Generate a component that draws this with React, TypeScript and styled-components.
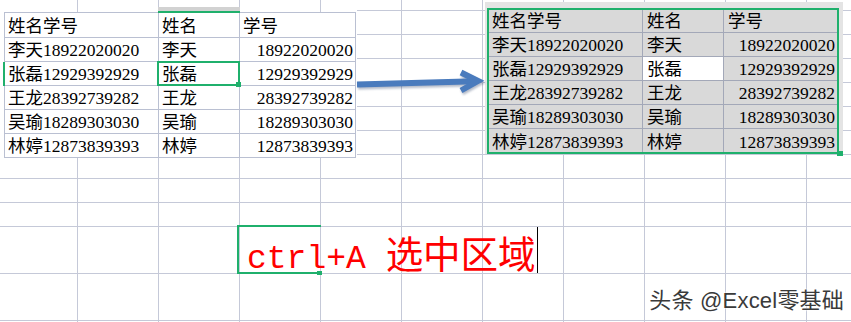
import React from "react";
import styled, { createGlobalStyle } from "styled-components";

const GRID = "#c5c9d8";
const GREEN = "#1fb06c";

const GlobalStyle = createGlobalStyle`
  html, body {
    margin: 0;
    padding: 0;
    background: #fff;
  }

  body {
    width: 851px;
    height: 322px;
    overflow: hidden;
    font-family: "Liberation Serif", "Noto Sans CJK SC", serif;
  }
`;

const Sheet = styled.div`
  width: 851px;
  height: 322px;
  display: flex;
  flex-direction: column;
  overflow: hidden;
  background: #fff;
`;

const TopArea = styled.div`
  flex: none;
  height: 226px;
  display: flex;
  align-items: flex-start;
  background-image: linear-gradient(to right, ${GRID} 1px, transparent 1px),
    linear-gradient(to bottom, ${GRID} 1px, transparent 1px);
  background-size: 81px 100%, 100% 24px;
  background-position: 77px 0, 0 10px;
`;

const BottomArea = styled.div`
  flex: 1;
  display: flex;
  flex-direction: column;
  background-image: linear-gradient(to right, ${GRID} 1px, transparent 1px),
    linear-gradient(to bottom, ${GRID} 1px, transparent 1px);
  background-size: 81px 100%, 100% 47px;
  background-position: 77px 0, 0 0;
`;

/* pasted screenshot on the left */
const LeftShot = styled.div`
  flex: none;
  padding: 12px 1px 4px 4px;
  background-color: #fff;
  background-image: linear-gradient(to right, ${GRID} 1px, transparent 1px);
  background-size: 81px 100%;
  background-position: 77px 0;
`;

/* pasted screenshot on the right */
const RightShot = styled.div`
  flex: none;
  margin-top: 2px;
  padding: 6px 4px 0 2px;
  background: #e4e4e4;
`;

const Table = styled.div<{ $cols: string; $rows: string; $line: string; $framed?: boolean }>`
  display: grid;
  grid-template-columns: ${({ $cols }) => $cols};
  grid-template-rows: ${({ $rows }) => $rows};
  border-top: ${({ $framed, $line }) => ($framed ? `1px solid ${$line}` : "none")};
  border-left: ${({ $framed, $line }) => ($framed ? `1px solid ${$line}` : "none")};
  background: #fff;
`;

const Selection = styled.div`
  position: relative;

  &::after {
    content: "";
    position: absolute;
    inset: 0;
    border: 2px solid ${GREEN};
    pointer-events: none;
  }

  &::before {
    content: "";
    position: absolute;
    right: -4px;
    bottom: -2px;
    width: 6px;
    height: 5px;
    background: ${GREEN};
    z-index: 1;
  }
`;

const Cell = styled.div<{
  $line: string;
  $right?: boolean;
  $fill?: string;
  $padL: number;
  $padR: number;
  $active?: boolean;
  $colMark?: boolean;
  $rowMark?: boolean;
}>`
  position: relative;
  display: flex;
  align-items: center;
  justify-content: ${({ $right }) => ($right ? "flex-end" : "flex-start")};
  padding: 1px ${({ $padR }) => $padR}px 0 ${({ $padL }) => $padL}px;
  border-right: 1px solid ${({ $line }) => $line};
  border-bottom: 1px solid ${({ $line }) => $line};
  background: ${({ $fill }) => $fill || "#fff"};
  color: #000;
  font-size: 17.5px;
  line-height: 22px;
  white-space: nowrap;
  box-shadow: ${({ $rowMark }) => ($rowMark ? `-2px 0 0 ${GREEN}` : "none")};

  ${({ $active }) =>
    $active &&
    `
    &::after {
      content: "";
      position: absolute;
      left: -2px;
      top: -1px;
      right: -1px;
      bottom: -1px;
      border: 2px solid ${GREEN};
    }
    &::before {
      content: "";
      position: absolute;
      right: -2px;
      bottom: -2px;
      width: 5px;
      height: 5px;
      background: ${GREEN};
      z-index: 1;
    }
  `}

  ${({ $colMark }) =>
    $colMark &&
    `
    &::before {
      content: "";
      position: absolute;
      left: -1px;
      right: -1px;
      top: -6px;
      height: 6px;
      box-sizing: border-box;
      background: #d2d2d2;
      border-bottom: 2px solid ${GREEN};
    }
  `}
`;

const ArrowSvg = styled.svg`
  flex: none;
  margin-top: 66px;
  overflow: visible;
  filter: drop-shadow(1px 2px 1px rgba(40, 60, 100, 0.35));
`;

const ActiveCell = styled.div`
  align-self: flex-start;
  position: relative;
  box-sizing: border-box;
  width: 84px;
  height: 49px;
  margin: -1px 0 0 237px;
  padding: 2px 0 0 8px;
  border: 2px solid ${GREEN};
  border-right: none;
  white-space: nowrap;

  &::after {
    content: "";
    position: absolute;
    right: -1px;
    bottom: -3px;
    width: 5px;
    height: 4px;
    background: ${GREEN};
  }
`;

const Typed = styled.span`
  display: inline-block;
  height: 44px;
  margin-top: -2px;
  padding-top: 2px;
  padding-right: 1px;
  border-right: 1px solid #000;
  color: #ff0000;
  font-family: "Noto Sans CJK SC", sans-serif;
  font-size: 37.5px;
  line-height: 45px;
`;

const Ascii = styled.span`
  font-family: "Liberation Mono", monospace;
  font-size: 33px;
  line-height: 1;
`;

const Footer = styled.div`
  display: flex;
  justify-content: flex-end;
  margin-top: 14px;
  padding-right: 7px;
`;

const Watermark = styled.span`
  font-family: "Liberation Sans", "Noto Sans CJK SC", sans-serif;
  font-size: 22px;
  line-height: 26px;
  letter-spacing: 0.2px;
  color: #3a3a3a;
  text-shadow: 0 0 2px #fff, 0 0 2px #fff, 0 0 1px #fff;
`;

const header = ["姓名学号", "姓名", "学号"];
const rows = [
  ["李天18922020020", "李天", "18922020020"],
  ["张磊12929392929", "张磊", "12929392929"],
  ["王龙28392739282", "王龙", "28392739282"],
  ["吴瑜18289303030", "吴瑜", "18289303030"],
  ["林婷12873839393", "林婷", "12873839393"],
];

const LEFT_LINE = "#bac0d2";
const RIGHT_LINE = "#a3a8b8";

const LeftTable = () => (
  <Table $cols="154px 81px 116px" $rows="25px repeat(5, 24px)" $line={LEFT_LINE} $framed>
    {header.map((h, i) => (
      <Cell key={h} $line={LEFT_LINE} $padL={3} $padR={2} $colMark={i === 1}>
        {h}
      </Cell>
    ))}
    {rows.map((r, ri) =>
      r.map((v, ci) => (
        <Cell
          key={`${ri}-${ci}`}
          $line={LEFT_LINE}
          $padL={3}
          $padR={2}
          $right={ci === 2}
          $active={ri === 1 && ci === 1}
          $rowMark={ri === 1 && ci === 0}
        >
          {v}
        </Cell>
      ))
    )}
  </Table>
);

const RightTable = () => (
  <Selection>
    <Table $cols="156px 81px 115px" $rows="25px repeat(4, 24px) 25px" $line={RIGHT_LINE}>
      {header.map((h, i) => (
        <Cell key={h} $line={RIGHT_LINE} $fill="#d9d9d9" $padL={i === 0 ? 5 : 4} $padR={3}>
          {h}
        </Cell>
      ))}
      {rows.map((r, ri) =>
        r.map((v, ci) => (
          <Cell
            key={`${ri}-${ci}`}
            $line={RIGHT_LINE}
            $fill={ri === 1 && ci === 1 ? "#fff" : "#d9d9d9"}
            $padL={ci === 0 ? 5 : 4}
            $padR={3}
            $right={ci === 2}
          >
            {v}
          </Cell>
        ))
      )}
    </Table>
  </Selection>
);

const Arrow = () => (
  <ArrowSvg width="128" height="36" viewBox="0 0 128 36">
    <path d="M0 18.5 L118 15.2" stroke="#4a7bbd" strokeWidth="6" fill="none" />
    <path
      d="M104 6.5 L121 15 L104 24.5"
      stroke="#4a7bbd"
      strokeWidth="6"
      fill="none"
      strokeLinejoin="miter"
      strokeMiterlimit={10}
    />
  </ArrowSvg>
);

export default function App() {
  return (
    <>
      <GlobalStyle />
      <Sheet>
        <TopArea>
          <LeftShot>
            <LeftTable />
          </LeftShot>
          <Arrow />
          <RightShot>
            <RightTable />
          </RightShot>
        </TopArea>
        <BottomArea>
          <ActiveCell>
            <Typed>
              <Ascii>ctrl+A </Ascii>选中区域
            </Typed>
          </ActiveCell>
          <Footer>
            <Watermark>头条 @Excel零基础</Watermark>
          </Footer>
        </BottomArea>
      </Sheet>
    </>
  );
}
